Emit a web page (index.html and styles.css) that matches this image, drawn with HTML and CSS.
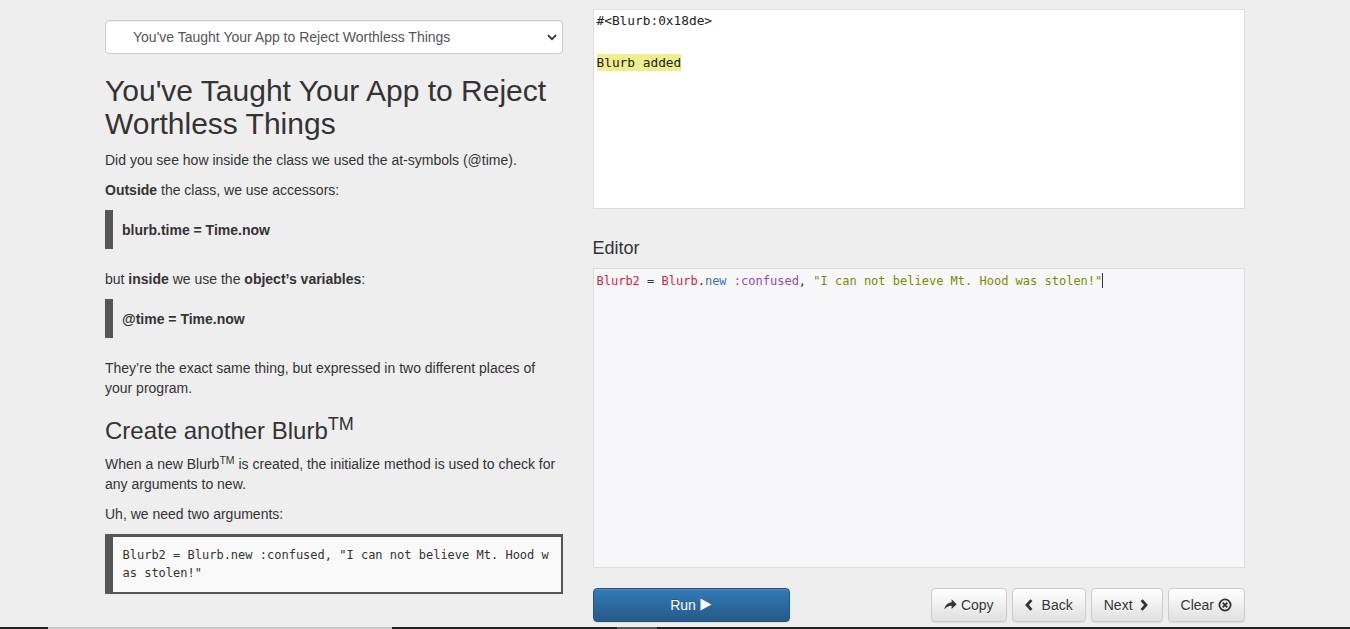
FILE: index.html
```html
<!DOCTYPE html>
<html lang="en">
<head>
<meta charset="utf-8">
<title>Blurb tutorial</title>
<link rel="stylesheet" href="styles.css">
</head>
<body>
<div class="page">
  <div class="container">
    <div class="col-left">
      <div class="select-wrap">
        <select class="lesson-select">
          <option>You've Taught Your App to Reject Worthless Things</option>
        </select>
        <svg class="select-caret" width="10" height="7" viewBox="0 0 10 7"><path d="M1 1.2 L5 5.2 L9 1.2" fill="none" stroke="#333" stroke-width="1.8"/></svg>
      </div>
      <h1 class="title">You've Taught Your App to Reject Worthless Things</h1>
      <p>Did you see how inside the class we used the at-symbols (@time).</p>
      <p><strong>Outside</strong> the class, we use accessors:</p>
      <blockquote class="quote"><strong>blurb.time = Time.now</strong></blockquote>
      <p>but <strong>inside</strong> we use the <strong>object’s variables</strong>:</p>
      <blockquote class="quote"><strong>@time = Time.now</strong></blockquote>
      <p>They’re the exact same thing, but expressed in two different places of your program.</p>
      <h3 class="subtitle">Create another Blurb<sup>TM</sup></h3>
      <p>When a new Blurb<sup>TM</sup> is created, the initialize method is used to check for any arguments to new.</p>
      <p>Uh, we need two arguments:</p>
      <pre class="code-sample">Blurb2 = Blurb.new :confused, "I can not believe Mt. Hood was stolen!"</pre>
    </div>
    <div class="col-right">
      <div class="output">
        <div class="out-line">#&lt;Blurb:0x18de&gt;</div>
        <div class="out-line">&nbsp;</div>
        <div class="out-line"><span class="out-mark">Blurb added</span></div>
      </div>
      <h4 class="editor-title">Editor</h4>
      <div class="editor">
        <div class="ed-line"><span class="tk-const">Blurb2</span> = <span class="tk-const">Blurb</span>.<span class="tk-method">new</span> <span class="tk-sym">:confused</span>, <span class="tk-str">"I can not believe Mt. Hood was stolen!"</span><span class="caret"></span></div>
      </div>
      <div class="actions">
        <button class="btn btn-primary run-btn">Run <svg width="12" height="13" viewBox="0 0 12 13"><path d="M0.5 0.5 L11.5 6.5 L0.5 12.5 Z" fill="#fff"/></svg></button>
        <div class="btn-group">
          <button class="btn btn-default"><svg width="13" height="11" viewBox="0 0 13 11"><path d="M0.3 10.5 C1.2 5.8 4 3.6 7.6 3.6 V0.3 L12.7 5.2 L7.6 10.1 V6.8 C4.6 6.8 2.3 7.9 0.3 10.5 Z" fill="#333"/></svg> Copy</button>
          <button class="btn btn-default"><svg width="13" height="12" viewBox="0 0 13 12"><path d="M6.4 1.1 L2 6 L6.4 10.9" fill="none" stroke="#333" stroke-width="2.8"/></svg> Back</button>
          <button class="btn btn-default">Next <svg width="13" height="12" viewBox="0 0 13 12"><path d="M4.6 1.1 L9 6 L4.6 10.9" fill="none" stroke="#333" stroke-width="2.8"/></svg></button>
          <button class="btn btn-default">Clear <svg width="14" height="14" viewBox="0 0 14 14"><circle cx="7" cy="7" r="5.6" fill="none" stroke="#333" stroke-width="1.8"/><path d="M4.7 4.7 L9.3 9.3 M9.3 4.7 L4.7 9.3" stroke="#333" stroke-width="1.9"/></svg></button>
        </div>
      </div>
    </div>
  </div>
</div>
<div class="bottom-strip">
  <span class="seg seg-dark seg-a"></span>
  <span class="seg seg-light seg-b"></span>
  <span class="seg seg-dark seg-c"></span>
  <span class="seg seg-mid seg-d"></span>
  <span class="seg seg-dark seg-e"></span>
</div>
</body>
</html>
```
FILE: styles.css
```css
* { box-sizing: border-box; }
html, body { margin: 0; padding: 0; }
body {
  background: #eeeeee;
  color: #333;
  font-family: "Liberation Sans", Arial, sans-serif;
  font-size: 14px;
  line-height: 20px;
  height: 629px;
  overflow: hidden;
  display: flex;
  flex-direction: column;
}
.page { flex: 1; min-height: 0; }
.container {
  width: 1140px;
  margin: 0 auto;
  display: flex;
  gap: 30px;
}
.col-left { width: 457.5px; padding-top: 20px; }
.col-right { width: 652.5px; padding-top: 9px; }

.select-wrap { position: relative; }
.lesson-select {
  display: block;
  width: 100%;
  height: 34px;
  appearance: none;
  -webkit-appearance: none;
  background: #fff;
  border: 1px solid #ccc;
  border-radius: 4px;
  box-shadow: inset 0 1px 1px rgba(0,0,0,.075);
  padding: 0 30px 0 27px;
  font-family: "Liberation Sans", Arial, sans-serif;
  font-size: 14px;
  color: #555;
}
.select-caret { position: absolute; right: 6px; top: 14px; }

.title {
  font-size: 30px;
  line-height: 33px;
  font-weight: normal;
  margin: 20px 0 10px;
  color: #333;
}
p { margin: 0 0 10px; }
strong { font-weight: bold; }
.quote {
  margin: 0 0 20px;
  padding: 9.5px 10px 9.5px 9px;
  border-left: 8px solid #555;
  font-size: 14px;
  line-height: 20px;
}
.subtitle {
  font-size: 24px;
  line-height: 26.4px;
  font-weight: normal;
  margin: 20px 0 10px;
}
sup {
  font-size: 75%;
  line-height: 0;
  position: relative;
  vertical-align: baseline;
  top: -0.5em;
}
.code-sample {
  margin: 0 0 10px;
  padding: 8.5px 9.5px;
  background: #f9f9f9;
  border-style: solid;
  border-color: #555;
  border-width: 3px 2px 2px 8px;
  font-family: "DejaVu Sans Mono", "Liberation Mono", monospace;
  font-size: 12px;
  line-height: 18.57px;
  color: #333;
  white-space: pre-wrap;
  word-break: break-all;
}

.output {
  height: 200px;
  background: #fff;
  border: 1px solid #ddd;
  padding: 0 3px;
  font-family: "DejaVu Sans Mono", "Liberation Mono", monospace;
  font-size: 12.8px;
  line-height: 21px;
  color: #222;
}
.out-mark { background: #eeee8e; padding: 1px 0; }

.editor-title {
  font-size: 18px;
  line-height: 19.8px;
  font-weight: normal;
  margin: 30px 0 9px;
  color: #333;
}
.editor {
  height: 300px;
  background: #f7f7f9;
  border: 1px solid #ddd;
  padding: 3px 3px;
  font-family: "DejaVu Sans Mono", "Liberation Mono", monospace;
  font-size: 12px;
  line-height: 18px;
  color: #333;
}
.tk-const { color: #c8283f; }
.tk-method { color: #3b6fb6; }
.tk-sym { color: #9048b8; }
.tk-str { color: #7b8a00; }
.caret {
  display: inline-block;
  width: 1px;
  height: 15px;
  background: #333;
  vertical-align: -3px;
}

.actions {
  margin-top: 20px;
  display: flex;
  justify-content: space-between;
}
.btn {
  height: 34px;
  padding: 6px 12px;
  font-family: "Liberation Sans", Arial, sans-serif;
  font-size: 14px;
  line-height: 20px;
  border-radius: 4px;
  border: 1px solid transparent;
  display: inline-flex;
  align-items: center;
  justify-content: center;
  gap: 4px;
  cursor: pointer;
}
.btn-primary {
  color: #fff;
  background: linear-gradient(to bottom, #337ab7 0, #265a88 100%);
  border-color: #245580;
  text-shadow: 0 -1px 0 rgba(0,0,0,.2);
  box-shadow: inset 0 1px 0 rgba(255,255,255,.15), 0 1px 1px rgba(0,0,0,.075);
}
.run-btn { width: 197px; }
.btn-group { display: flex; gap: 5px; }
.btn-default {
  color: #333;
  background: linear-gradient(to bottom, #fff 0, #e0e0e0 100%);
  border-color: #ccc;
  text-shadow: 0 1px 0 #fff;
  box-shadow: inset 0 1px 0 rgba(255,255,255,.15), 0 1px 1px rgba(0,0,0,.075);
}
.btn-default svg { flex: none; }

.bottom-strip { flex: none; height: 2px; display: flex; }
.seg { display: block; height: 2px; }
.seg-dark { background: #222; }
.seg-light { background: #c8c8c8; }
.seg-mid { background: #555; }
.seg-a { width: 48px; }
.seg-b { width: 344px; }
.seg-c { width: 225px; }
.seg-d { width: 40px; }
.seg-e { flex: 1; }
```
